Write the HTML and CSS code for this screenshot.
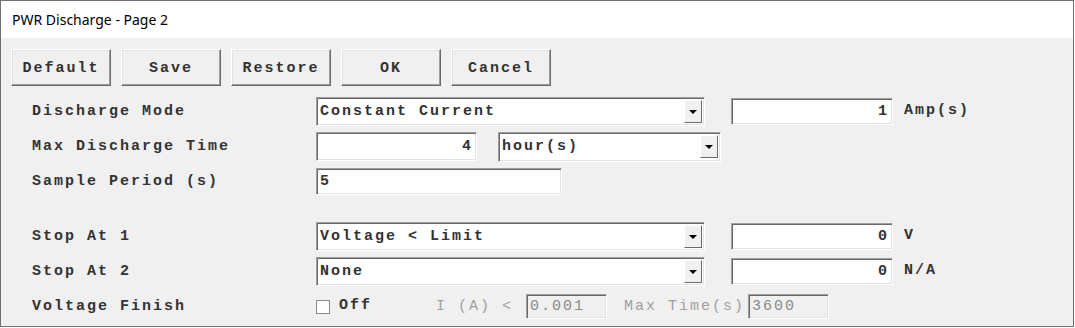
FILE: index.html
```html
<!DOCTYPE html>
<html lang="en">
<head>
  <meta charset="UTF-8" />
  <title>PWR Discharge - Page 2</title>
  <link rel="stylesheet" href="styles.css">
</head>
<body>

  <div class="window">
    <div class="titlebar">PWR Discharge - Page 2</div>

    <div class="toolbar">
      <button class="btn">Default</button>
      <button class="btn">Save</button>
      <button class="btn">Restore</button>
      <button class="btn">OK</button>
      <button class="btn">Cancel</button>
    </div>

    <div class="form">
      <div class="row">
        <span class="label">Discharge Mode</span>
        <div class="field combo w-wide"><span class="combo-text">Constant Current</span><span class="drop"></span></div>
        <div class="field num w-val">1</div>
        <span class="unit">Amp(s)</span>
      </div>

      <div class="row">
        <span class="label">Max Discharge Time</span>
        <div class="field num w-time">4</div>
        <div class="field combo w-unit"><span class="combo-text">hour(s)</span><span class="drop"></span></div>
      </div>

      <div class="row">
        <span class="label">Sample Period (s)</span>
        <div class="field w-period">5</div>
      </div>

      <div class="row spaced">
        <span class="label">Stop At 1</span>
        <div class="field combo w-wide"><span class="combo-text">Voltage &lt; Limit</span><span class="drop"></span></div>
        <div class="field num w-val">0</div>
        <span class="unit">V</span>
      </div>

      <div class="row">
        <span class="label">Stop At 2</span>
        <div class="field combo w-wide"><span class="combo-text">None</span><span class="drop"></span></div>
        <div class="field num w-val">0</div>
        <span class="unit">N/A</span>
      </div>

      <div class="row">
        <span class="label">Voltage Finish</span>
        <span class="check"></span>
        <span class="check-label">Off</span>
        <span class="dis-label cur-label">I (A) &lt;</span>
        <div class="field disabled w-small">0.001</div>
        <span class="dis-label time-label">Max Time(s)</span>
        <div class="field disabled w-small">3600</div>
      </div>
    </div>
  </div>

</body>
</html>
```

FILE: styles.css
```css
body {
  margin: 0;
  background: #fff;
}

.window {
  width: 1074px;
  height: 327px;
  box-sizing: border-box;
  border: 1px solid #707070;
  background: #f0f0f0;
  font-family: 'Liberation Mono', 'Courier New', monospace;
  font-weight: bold;
  font-size: 15px;
  letter-spacing: 2px;
  color: #333;
}

.titlebar {
  height: 37px;
  background: #fff;
  padding-left: 11px;
  line-height: 37px;
  font-family: 'Noto Sans', 'Segoe UI', sans-serif;
  font-weight: normal;
  font-size: 14px;
  letter-spacing: 0;
  color: #000;
}

.toolbar {
  display: flex;
  gap: 10px;
  padding: 11px 0 0 10px;
}

.btn {
  width: 100px;
  height: 37px;
  background: #f0f0f0;
  border: 1px solid;
  border-color: #fff #696969 #696969 #fff;
  box-shadow: inset -1px -1px 0 #a0a0a0, inset 1px 1px 0 #e3e3e3;
  font: inherit;
  letter-spacing: 2px;
  color: #333;
  padding: 2px 0 0;
}

.form {
  padding-top: 8px;
}

.row {
  height: 35px;
  display: flex;
  align-items: center;
}

.row.spaced {
  margin-top: 20px;
}

.label {
  width: 284px;
  padding-left: 31px;
}

.field {
  height: 27px;
  box-sizing: border-box;
  background: #fff;
  border: 1px solid;
  border-color: #a0a0a0 #fff #fff #a0a0a0;
  box-shadow: inset 1px 1px 0 #696969, inset -1px -1px 0 #e3e3e3;
  display: flex;
  align-items: center;
  padding: 0 3px;
  white-space: nowrap;
}

.field.num {
  justify-content: flex-end;
  padding-right: 3px;
}

.combo {
  height: 29px;
  padding-right: 2px;
}

.combo-text {
  flex: 1;
}

.drop {
  width: 18px;
  height: 23px;
  box-sizing: border-box;
  background: #f0f0f0;
  border: 1px solid;
  border-color: #fff #696969 #696969 #fff;
  display: flex;
  align-items: center;
  justify-content: center;
}

.drop::after {
  content: "";
  border-left: 4px solid transparent;
  border-right: 4px solid transparent;
  border-top: 4px solid #000;
}

.w-wide { width: 389px; }
.w-val { width: 162px; margin-left: 26px; }
.w-time { width: 161px; height: 29px; }
.w-unit { width: 223px; height: 30px; margin-left: 21px; }
.w-period { width: 246px; }

.unit {
  margin-left: 11px;
  margin-top: -3px;
}

.check {
  width: 14px;
  height: 14px;
  box-sizing: border-box;
  background: #fff;
  border: 1px solid #8a8a8a;
  margin-right: 9px;
}

.check-label {
  margin-top: -2px;
}

.dis-label {
  font-weight: normal;
  color: #a0a0a0;
}

.cur-label { margin-left: 64px; margin-right: 13px; }
.time-label { margin-left: 17px; margin-right: 3px; }

.field.disabled {
  width: 81px;
  height: 25px;
  background: #f0f0f0;
  color: #8a8a8a;
  font-weight: normal;
}
```
